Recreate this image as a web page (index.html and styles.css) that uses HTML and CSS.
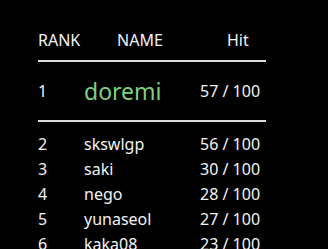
FILE: index.html
```html
<!DOCTYPE html>
<html>
<head>
<meta charset="utf-8">
<link rel="stylesheet" href="styles.css">
</head>
<body>
<div class="board">
  <div class="row head">
    <span class="c-rank">RANK</span>
    <span class="c-name">NAME</span>
    <span class="c-hit">Hit</span>
  </div>
  <div class="row top">
    <span class="c-rank">1</span>
    <span class="c-name winner">doremi</span>
    <span class="c-hit">57 / 100</span>
  </div>
  <div class="list">
    <div class="row"><span class="c-rank">2</span><span class="c-name">skswlgp</span><span class="c-hit">56 / 100</span></div>
    <div class="row"><span class="c-rank">3</span><span class="c-name">saki</span><span class="c-hit">30 / 100</span></div>
    <div class="row"><span class="c-rank">4</span><span class="c-name">nego</span><span class="c-hit">28 / 100</span></div>
    <div class="row"><span class="c-rank">5</span><span class="c-name">yunaseol</span><span class="c-hit">27 / 100</span></div>
    <div class="row"><span class="c-rank">6</span><span class="c-name">kaka08</span><span class="c-hit">23 / 100</span></div>
  </div>
</div>
</body>
</html>
```
FILE: styles.css
```css
html, body {
  margin: 0;
  padding: 0;
  background: #000;
  overflow: hidden;
}
body {
  font-family: "Noto Sans", "Open Sans", sans-serif;
  font-size: 16px;
  color: #f4f4f4;
}
.board {
  width: 228px;
  margin-left: 38px;
  padding-top: 28px;
}
.row {
  display: grid;
  grid-template-columns: 46px 116px 66px;
  align-items: center;
  line-height: 25px;
  white-space: nowrap;
}
.head {
  line-height: 24px;
  padding-bottom: 8px;
  border-bottom: 2px solid #dcdcdc;
}
.head .c-name { padding-left: 33px; }
.head .c-hit { padding-left: 27px; }
.top {
  height: 58px;
  line-height: 24px;
  border-bottom: 2px solid #dcdcdc;
}
.winner {
  font-size: 23px;
  line-height: 32px;
  color: #7fd07f;
}
.list {
  padding-top: 10px;
}
```
